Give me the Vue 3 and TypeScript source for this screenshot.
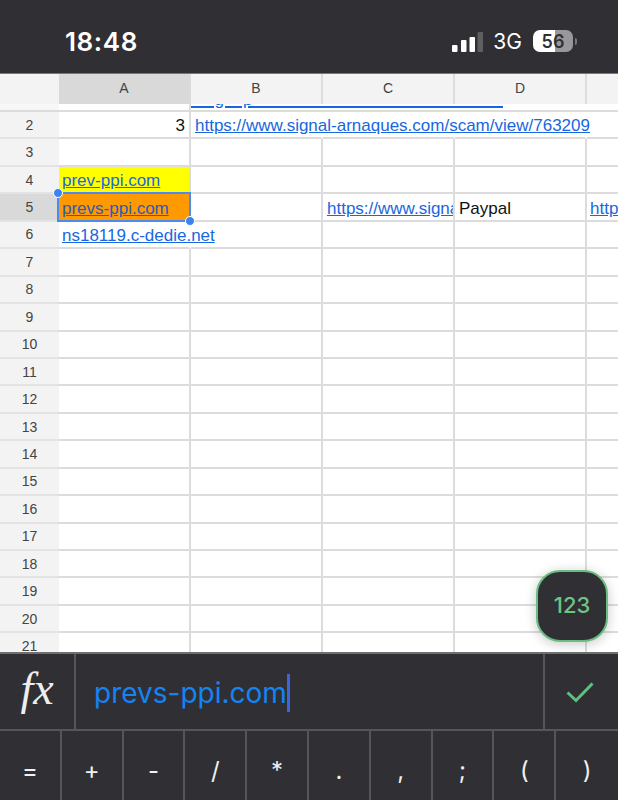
<script setup lang="ts">
const cols = ['A', 'B', 'C', 'D']
const rows = Array.from({ length: 20 }, (_, i) => i + 2)
const keys = ['=', '+', '-', '/', '*', '.', ',', ';', '(', ')']
const peekText = '\u00a0'.repeat(5) + 'g' + '\u00a0'.repeat(4) + 'p' + '\u00a0'.repeat(54)
</script>

<template>
  <div class="phone">
    <header class="status">
      <span class="time">18:48</span>
      <div class="indicators">
        <svg class="signal" width="31" height="20" viewBox="0 0 31 20">
          <rect x="0" y="13" width="5.5" height="7" rx="1" fill="#fff" />
          <rect x="9" y="8" width="5.5" height="12" rx="1" fill="#fff" />
          <rect x="17.5" y="5" width="5.5" height="15" rx="1" fill="#fff" />
          <rect x="25.5" y="0" width="5.5" height="20" rx="1" fill="#5f5f62" />
        </svg>
        <span class="net">3G</span>
        <div class="battery"><span class="level">56</span></div>
        <span class="nub"></span>
      </div>
    </header>

    <div class="col-head">
      <div class="corner"></div>
      <div v-for="c in cols" :key="c" class="col-cell" :class="{ on: c === 'A' }">{{ c }}</div>
      <div class="col-cell last"></div>
    </div>

    <div class="sheet">
      <div class="row-peek">
        <div class="num"></div>
        <div class="peek-a"></div>
        <div class="peek-b"><a class="peek-link">{{ peekText }}</a></div>
      </div>

      <div v-for="r in rows" :key="r" class="row">
        <div class="num" :class="{ on: r === 5 }">{{ r }}</div>
        <div class="cell a" :class="{ yellow: r === 4, orange: r === 5, 'right-num': r === 2, open: r === 6 }">
          <span v-if="r === 2" class="plain">3</span>
          <a v-else-if="r === 4" class="link">prev-ppi.com</a>
          <a v-else-if="r === 5" class="link">prevs-ppi.com</a>
          <a v-else-if="r === 6" class="link spill">ns18119.c-dedie.net</a>
          <div v-if="r === 5" class="selection">
            <i class="handle tl"></i>
            <i class="handle br"></i>
          </div>
        </div>
        <div class="cell b" :class="{ open: r === 2 }">
          <a v-if="r === 2" class="link spill">https://www.signal-arnaques.com/scam/view/763209</a>
        </div>
        <div class="cell c" :class="{ open: r === 2 }">
          <a v-if="r === 5" class="link">https://www.signal-arnaques.com</a>
        </div>
        <div class="cell d" :class="{ open: r === 2 }"><span v-if="r === 5" class="plain">Paypal</span></div>
        <div class="cell e"><a v-if="r === 5" class="link">https://www.signal</a></div>
      </div>

      <button class="fab">123</button>
    </div>

    <section class="formula">
      <div class="fx">fx</div>
      <div class="input">
        <span class="value">prevs-ppi.com</span><span class="caret"></span>
      </div>
      <div class="confirm">
        <svg width="32" height="24" viewBox="0 0 32 24" fill="none">
          <path d="M3.5 12.5 L12 20.5 L28.5 3.5" stroke="#5fc17f" stroke-width="3" />
        </svg>
      </div>
    </section>

    <nav class="keys">
      <div v-for="k in keys" :key="k" class="key">{{ k }}</div>
    </nav>
  </div>
</template>

<style>
html, body { margin: 0; background: #fff; }
</style>

<style scoped>
.phone {
  width: 618px;
  height: 800px;
  display: flex;
  flex-direction: column;
  overflow: hidden;
  font-family: "Liberation Sans", Arial, sans-serif;
  background: #fff;
}
.status {
  height: 74px;
  flex: none;
  box-sizing: border-box;
  background: #303034;
  border-bottom: 1px solid #77777a;
  display: flex;
  justify-content: space-between;
  align-items: center;
  padding: 9px 41px 0 65px;
  color: #fff;
}
.time { font-family: Inter, sans-serif; font-size: 26px; font-weight: 600; letter-spacing: 0.6px; }
.indicators { display: flex; align-items: center; }
.signal { margin-top: 1px; }
.net { font-family: Inter, sans-serif; font-size: 21px; font-weight: 400; margin-left: 10px; }
.battery {
  margin-left: 11px;
  width: 40px;
  height: 22px;
  border-radius: 7px;
  background: linear-gradient(90deg, #fff 0 55%, #98989a 55% 100%);
  display: flex;
  align-items: center;
  justify-content: center;
}
.level { color: #303034; font-family: Inter, sans-serif; font-size: 18px; font-weight: 600; }
.nub { width: 2px; height: 7px; background: #77777a; border-radius: 0 2px 2px 0; margin-left: 2px; }

.col-head {
  height: 30px;
  flex: none;
  display: flex;
  background: #f3f3f3;
  color: #444;
  font-size: 14px;
}
.corner { width: 59px; flex: none; }
.col-cell {
  width: 132px;
  flex: none;
  box-sizing: border-box;
  display: flex;
  align-items: center;
  justify-content: center;
  border-right: 2px solid #dcdcdc;
  padding-bottom: 2px;
}
.col-cell.on { background: #d9d9d9; }
.col-cell.last { border-right: 0; flex: 1; width: auto; }

.sheet { flex: 1; min-height: 0; position: relative; overflow: hidden; }
.row-peek {
  height: 6px;
  display: flex;
  border-bottom: 2px solid #dcdcdc;
}
.row-peek .num { height: auto; border-bottom: 0; padding: 0; background: #f7f7f7; }
.peek-a { width: 132px; box-sizing: border-box; flex: none; border-right: 2px solid #dcdcdc; }
.peek-b { width: 312px; flex: none; overflow: hidden; display: flex; align-items: flex-end; }
.peek-link {
  display: block;
  color: #1967e0;
  font-size: 17px;
  line-height: 18px;
  white-space: nowrap;
  text-decoration: underline;
  text-decoration-thickness: 2px;
  margin-bottom: 1px;
}
.row {
  height: 27.45px;
  box-sizing: border-box;
  display: flex;
  position: relative;
}
.num {
  width: 59px;
  flex: none;
  box-sizing: border-box;
  background: #f3f3f3;
  color: #444;
  font-size: 14px;
  display: flex;
  align-items: center;
  justify-content: center;
  border-bottom: 2px solid #e3e3e3;
}
.num.on { background: #d9d9d9; }
.cell {
  width: 132px;
  flex: none;
  box-sizing: border-box;
  border-right: 2px solid #dcdcdc;
  border-bottom: 2px solid #dcdcdc;
  display: flex;
  align-items: center;
  padding: 3px 0 0 3px;
  font-size: 17px;
  overflow: hidden;
  white-space: nowrap;
  position: relative;
}
.cell.a { overflow: visible; }
.cell.b { padding-left: 4px; }
.cell.open { overflow: visible; border-right-color: transparent; }
.cell.right-num { justify-content: flex-end; padding-right: 4px; }
.cell.c, .cell.d { padding-left: 4px; }
.cell.e { flex: 1; width: auto; border-right: 0; }
.yellow { background: #ffff00; }
.orange { background: #ff9900; }
.link { color: #1967e0; text-decoration: underline; white-space: nowrap; }
.orange .link { color: #2a5bbd; }
.spill { position: relative; z-index: 1; }
.plain { color: #111; }
.selection {
  position: absolute;
  left: -2px;
  top: -2px;
  right: -2px;
  bottom: -2px;
  border: 2px solid #4a8af4;
  pointer-events: none;
  z-index: 2;
}
.handle {
  position: absolute;
  width: 8px;
  height: 8px;
  border-radius: 50%;
  background: #3d83f0;
  border: 1px solid #fff;
}
.handle.tl { left: -6px; top: -6px; }
.handle.br { right: -6px; bottom: -6px; }

.fab {
  position: absolute;
  left: 536px;
  top: 466px;
  width: 72px;
  height: 72px;
  box-sizing: border-box;
  border: 2px solid #69bd82;
  border-radius: 24px;
  background: #303034;
  color: #6cc585;
  font-family: Inter, sans-serif;
  font-size: 22px;
  font-weight: 500;
  padding: 0 0 2px;
  box-shadow: 0 2px 12px rgba(0, 0, 0, 0.22);
}

.formula {
  height: 79px;
  flex: none;
  box-sizing: border-box;
  display: flex;
  background: #303034;
  border-top: 2px solid #6f6f72;
  border-bottom: 2px solid #55555a;
}
.fx {
  width: 76px;
  flex: none;
  box-sizing: border-box;
  border-right: 2px solid #55555a;
  display: flex;
  align-items: center;
  justify-content: center;
  color: #eee;
  font-family: "Liberation Serif", serif;
  font-style: italic;
  font-size: 46px;
  padding-bottom: 6px;
}
.input { flex: 1; display: flex; align-items: center; padding: 2px 0 0 18px; }
.value { color: #1484f5; font-family: Inter, sans-serif; font-size: 28px; }
.caret { width: 3px; height: 38px; background: #3f63e0; }
.confirm {
  width: 75px;
  flex: none;
  box-sizing: border-box;
  border-left: 2px solid #55555a;
  display: flex;
  align-items: center;
  justify-content: center;
  padding-right: 3px;
}
.keys {
  height: 69px;
  flex: none;
  display: grid;
  grid-template-columns: repeat(10, 1fr);
  background: #303034;
}
.key {
  box-sizing: border-box;
  border-right: 2px solid #55555a;
  display: flex;
  align-items: center;
  justify-content: center;
  color: #f1f1f1;
  font-size: 24px;
  font-family: Inter, sans-serif;
  padding-top: 9px;
}
.key:last-child { border-right: 0; }
</style>
